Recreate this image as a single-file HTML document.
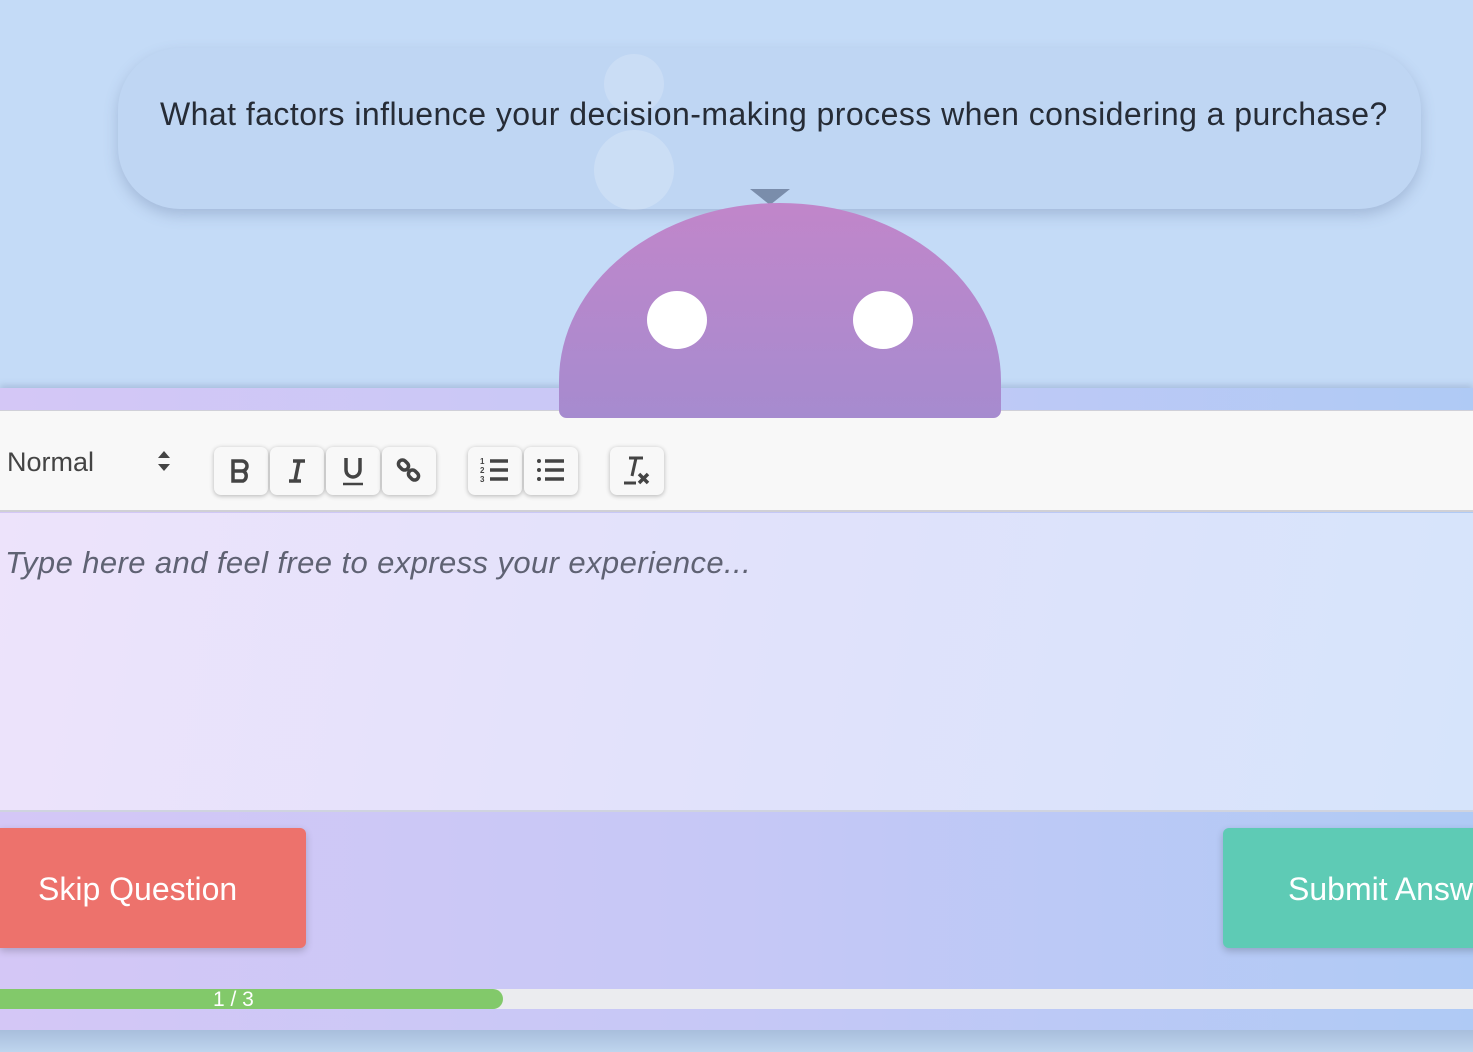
<!DOCTYPE html>
<html><head><style>
*{margin:0;padding:0;box-sizing:border-box}
body{width:1473px;height:1052px;overflow:hidden;background:#c4dbf7;font-family:"Liberation Sans",sans-serif;position:relative}
.abs{position:absolute}
.bubble{left:118px;top:48px;width:1303px;height:161px;border-radius:62px;background:#bfd6f3;box-shadow:0 6px 14px rgba(90,110,150,.3)}
.q{left:160px;top:96px;font-size:32px;color:#262c36;white-space:nowrap;letter-spacing:0.45px}
.panel{left:0;top:388px;width:1473px;height:642px;background:linear-gradient(90deg,#d4c7f6,#c6c8f6 50%,#afcaf5);box-shadow:0 -3px 6px rgba(90,110,150,.25)}
.tool{left:0;top:410px;width:1473px;height:102px;background:#f8f8f8;border-top:1px solid #d0d0d8;border-bottom:2px solid #d0d0d5}
.editor{left:0;top:513px;width:1473px;height:299px;background:linear-gradient(100deg,#ede3fb,#e1e2fb 50%,#d6e4fb);border-bottom:2px solid #cfd3df}
.btn{width:54px;height:48px;background:#f8f8f8;border-radius:7px;box-shadow:0 1px 5px rgba(0,0,0,.28);display:flex;align-items:center;justify-content:center;top:447px;color:#444;font-size:30px}
</style></head><body>
<div class="abs bubble"></div>
<div class="abs" style="left:604px;top:54px;width:60px;height:60px;border-radius:50%;background:rgba(255,255,255,.18)"></div>
<div class="abs" style="left:594px;top:130px;width:80px;height:80px;border-radius:50%;background:rgba(255,255,255,.2)"></div>
<div class="abs q">What factors influence your decision-making process when considering a purchase?</div>
<div class="abs" style="left:750px;top:189px;width:0;height:0;border-left:20px solid transparent;border-right:20px solid transparent;border-top:16px solid #7a8dab"></div>
<div class="abs panel"></div>
<div class="abs tool"></div>
<div class="abs" style="left:559px;top:203px;width:442px;height:215px;background:linear-gradient(#c186ca,#a68bcf);border-radius:230px 230px 8px 8px/185px 185px 8px 8px;z-index:2"></div>
<div class="abs" style="left:647px;top:291px;width:60px;height:58px;border-radius:50%;background:#fff;z-index:3"></div>
<div class="abs" style="left:853px;top:291px;width:60px;height:58px;border-radius:50%;background:#fff;z-index:3"></div>
<div class="abs" style="left:7px;top:447px;font-size:27px;color:#444">Normal</div>
<svg class="abs" style="left:157px;top:450px" width="14" height="22"><path d="M7 1 L13 8 H1Z M7 21 L13 14 H1Z" fill="#444"/></svg>
<div class="abs btn" style="left:214px"><svg width="24" height="26"><path d="M4 3h9a5 5 0 0 1 0 10H4z M4 13h10a5.5 5.5 0 0 1 0 10H4z" fill="none" stroke="#444" stroke-width="3.5"/></svg></div>
<div class="abs btn" style="left:270px"><svg width="24" height="26"><path d="M8 3h12 M4 23h12 M14 3l-4 20" stroke="#444" stroke-width="3.5" fill="none"/></svg></div>
<div class="abs btn" style="left:326px"><svg width="26" height="30"><path d="M6 2v12a7 7 0 0 0 14 0V2" stroke="#444" stroke-width="3.5" fill="none"/><path d="M3 28h20" stroke="#444" stroke-width="2.5"/></svg></div>
<div class="abs btn" style="left:382px"><svg width="30" height="30"><g fill="none" stroke="#444" stroke-width="3.5"><rect x="4" y="5" width="11" height="8" rx="4" transform="rotate(45 9.5 9)"/><rect x="14" y="15" width="11" height="8" rx="4" transform="rotate(45 19.5 19)"/></g></svg></div>
<div class="abs btn" style="left:468px"><svg width="32" height="30" font-family="Liberation Sans" font-size="8" font-weight="bold" fill="#444"><text x="1" y="8">1</text><text x="1" y="17">2</text><text x="1" y="26">3</text><path d="M11 5h18M11 14h18M11 23h18" stroke="#444" stroke-width="3.5"/></svg></div>
<div class="abs btn" style="left:524px"><svg width="32" height="30"><g fill="#444"><circle cx="4" cy="5" r="2"/><circle cx="4" cy="14" r="2"/><circle cx="4" cy="23" r="2"/></g><path d="M10 5h19M10 14h19M10 23h19" stroke="#444" stroke-width="3.5"/></svg></div>
<div class="abs btn" style="left:610px"><svg width="32" height="32"><path d="M8 3h14 M15 3l-4 18 M3 28h12" stroke="#444" stroke-width="3" fill="none"/><path d="M18 19l9 9M27 19l-9 9" stroke="#444" stroke-width="3.5"/></svg></div>
<div class="abs editor"></div>
<div class="abs" style="left:5px;top:545px;font-size:31px;font-style:italic;color:#5f6273;letter-spacing:0.4px">Type here and feel free to express your experience...</div>
<div class="abs" style="left:0;top:828px;width:306px;height:120px;background:#ed726c;border-radius:0 6px 6px 0;box-shadow:0 3px 8px rgba(0,0,0,.2);color:#fff;font-size:32px;line-height:122px;padding-left:38px">Skip Question</div>
<div class="abs" style="left:1223px;top:828px;width:260px;height:120px;background:#5ecbb5;border-radius:6px;box-shadow:0 3px 8px rgba(0,0,0,.2);color:#fff;font-size:32px;line-height:122px;padding-left:65px;white-space:nowrap">Submit Answer</div>
<div class="abs" style="left:0;top:989px;width:1473px;height:20px;background:#ebecef"></div>
<div class="abs" style="left:0;top:989px;width:503px;height:20px;background:#82c96a;border-radius:0 10px 10px 0;color:#fff;font-size:21px;line-height:22px;padding-left:213px">1 / 3</div>
<div class="abs" style="left:0;top:1030px;width:1473px;height:22px;background:linear-gradient(#a8bedc,#bed5ee)"></div>
</body></html>
